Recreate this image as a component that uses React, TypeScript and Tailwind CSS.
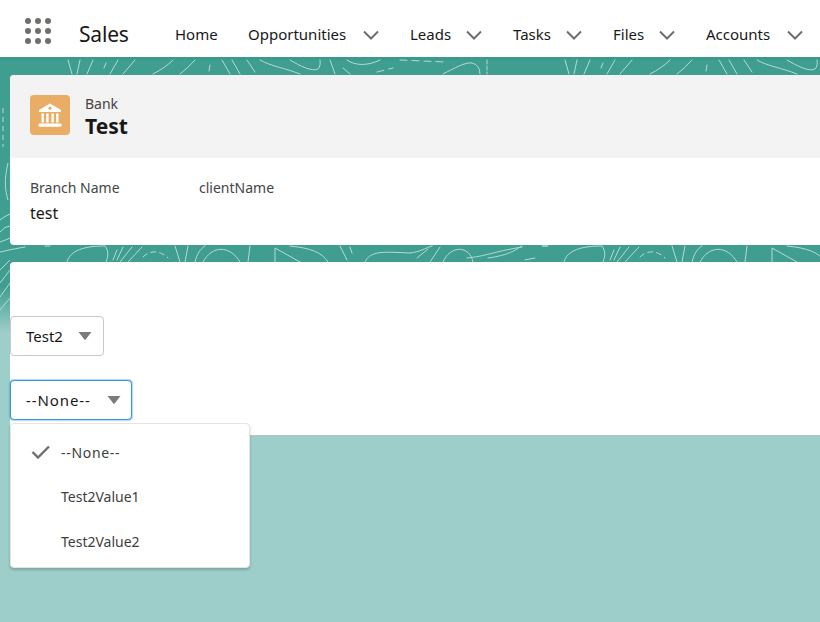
import React from "react";

const font = { fontFamily: '"Noto Sans", "Open Sans", sans-serif' };

const NavItems = [
  { label: "Home", width: "w-[73px]", menu: false },
  { label: "Opportunities", width: "w-[162px]", menu: true },
  { label: "Leads", width: "w-[103px]", menu: true },
  { label: "Tasks", width: "w-[100px]", menu: true },
  { label: "Files", width: "w-[93px]", menu: true },
  { label: "Accounts", width: "w-[128px]", menu: true },
];

const Chevron = () => (
  <svg width="16" height="10" viewBox="0 0 16 10" fill="none" className="shrink-0">
    <path d="M1 1.5 L8 8.5 L15 1.5" stroke="#706e6b" strokeWidth="2" />
  </svg>
);

const Caret = () => (
  <svg width="14" height="8" viewBox="0 0 14 8" className="shrink-0">
    <path d="M0.5 0 H13.5 L7.6 7.6 Q7 8 6.4 7.6 Z" fill="#7d7b79" />
  </svg>
);

const BankIcon = () => (
  <svg width="40" height="40" viewBox="0 0 40 40" className="shrink-0">
    <rect width="40" height="40" rx="4" fill="#e9ad66" />
    <path d="M20 8.5 L31 15 V17 H9 V15 Z" fill="#fff" />
    <circle cx="20" cy="13.2" r="1.6" fill="#e9ad66" />
    <rect x="11.5" y="18.5" width="2.4" height="9" fill="#fff" />
    <rect x="16.2" y="18.5" width="2.4" height="9" fill="#fff" />
    <rect x="21.4" y="18.5" width="2.4" height="9" fill="#fff" />
    <rect x="26.1" y="18.5" width="2.4" height="9" fill="#fff" />
    <rect x="8.5" y="28.5" width="23" height="3.2" rx="1.2" fill="#fff" />
  </svg>
);

const Background = () => (
  <svg
    width="820"
    height="320"
    viewBox="0 57 820 320"
    className="absolute left-0 top-[57px]"
  >
    <defs>
      <linearGradient id="fade" x1="0" y1="0" x2="0" y2="1">
        <stop offset="0" stopColor="#3f9e8f" />
        <stop offset="0.72" stopColor="#3f9e8f" />
        <stop offset="0.86" stopColor="#9ecec9" />
        <stop offset="1" stopColor="#9ecec9" />
      </linearGradient>
      <g
        id="lines"
        fill="none"
        stroke="#b4dbd5"
        strokeWidth="1"
        strokeLinecap="round"
      >
        <path d="M68 60 L72 74 M80 60 L77 74 M93 60 L87 74 M106 63 L104 68 M118 60 L110 74 M135 60 L123 74" />
        <path d="M173 60 Q165 68 153 74 M195 60 Q188 68 180 74 M210 65 L209 71 M222 60 L230 74 M232 60 L240 74 M247 60 L255 72" />
        <path d="M260 60 C270 66 285 68 300 74 M290 60 C300 66 312 72 318 69 Q321 66 320 60 M330 60 L335 74 M343 68 L350 74" />
        <path d="M347 60 C355 66 368 66 380 60" />
        <path d="M377 72 L393 68 M400 60 L445 62" strokeDasharray="7 5" />
        <path d="M443 74 C455 68 465 62 472 63 Q480 65 480 74" />
        <path d="M487 60 V74" strokeDasharray="4 2" />
        <path d="M-30 258 C-10 256 -5 252 25 247 M45 246 H50" />
        <path d="M67 262 C70 250 85 246 105 246 C108 250 109 255 106 262" />
        <path d="M117 250 L113 260 M123 247 L117 260 M132 247 L120 262 M142 247 L128 262" />
        <path d="M143 257 C150 250 160 250 168 258" strokeDasharray="5 4" />
        <path d="M175 246 L180 262 M188 246 L185 262 M195 262 C197 254 200 249 205 246" />
        <path d="M203 262 C212 245 230 245 240 262 M250 246 L248 262 M275 262 V248 L300 262" />
        <path d="M290 246 C310 248 322 252 328 262 M340 246 L347 260 M350 247 L352 253" />
        <path d="M365 262 C370 250 385 252 410 253 C420 252 425 248 432 246" />
        <path d="M417 258 L428 249 M430 262 L440 247" />
        <path d="M443 262 C450 245 470 245 473 262" />
        <path d="M488 258 C510 255 515 250 522 246 M525 260 L535 258 M543 246 H548" />
      </g>
    </defs>
    <rect x="0" y="57" width="820" height="320" fill="url(#fade)" />
    <rect x="0" y="57" width="820" height="3" fill="#3b9a8b" />
    <use href="#lines" />
    <use href="#lines" x="497" />
    <g fill="none" stroke="#b4dbd5" strokeWidth="1">
      <path d="M3 108 V147" strokeDasharray="5 4" />
      <path d="M8 163 C4 180 5 190 8 200" />
      <path d="M0 220 Q5 216 10 214 M0 232 Q5 226 10 226 M0 242 Q6 240 10 238" />
      <path d="M0 270 L10 260 M0 283 L10 270 M0 297 L10 283 M0 310 L10 298" />
    </g>
  </svg>
);

export default function App() {
  return (
    <div
      className="relative h-[622px] w-[820px] overflow-hidden bg-[#9ecec9] text-[#181818]"
      style={font}
    >
      <Background />

      <header className="relative flex h-[57px] items-center bg-white pt-[12px]">
        <div className="mb-[8px] ml-[25px] grid w-[26px] shrink-0 grid-cols-3 gap-x-[4px] gap-y-[4px]">
          {Array.from({ length: 9 }).map((_, i) => (
            <span key={i} className="h-[6px] w-[6px] rounded-full bg-[#706e6b]" />
          ))}
        </div>
        <div className="ml-[28px] w-[96px] shrink-0 text-[21px] leading-none tracking-[-0.2px]">
          Sales
        </div>
        <nav className="flex shrink-0 items-center">
          {NavItems.map((item) => (
            <div
              key={item.label}
              className={`flex shrink-0 items-center justify-between pr-[31px] text-[15px] leading-none ${item.width}`}
            >
              <span>{item.label}</span>
              {item.menu && <Chevron />}
            </div>
          ))}
        </nav>
      </header>

      <main className="relative flex flex-col pl-[10px] pt-[18px]">
        <section className="h-[170px] w-[830px] overflow-hidden rounded-[4px] bg-white">
          <div className="flex h-[83px] items-start gap-[15px] bg-[#f3f3f3] pl-[20px] pt-[20px]">
            <BankIcon />
            <div className="flex flex-col">
              <span className="text-[14px] leading-[18px] text-[#444444]">Bank</span>
              <span className="text-[21px] font-bold leading-[26px]">Test</span>
            </div>
          </div>
          <div className="flex pl-[20px] pt-[20px]">
            <div className="w-[169px]">
              <div className="text-[14px] leading-[20px] text-[#444444]">Branch Name</div>
              <div className="mt-[3px] text-[16px] leading-[24px]">test</div>
            </div>
            <div className="text-[14px] leading-[20px] text-[#444444]">clientName</div>
          </div>
        </section>

        <section className="relative mt-[17px] flex h-[174px] w-[830px] flex-col items-start gap-[24px] rounded-t-[4px] border-b border-[#bcc4c3] bg-white pt-[54px]">
          <button className="flex h-[40px] w-[94px] items-center justify-between rounded-[4px] border border-[#c9c7c5] bg-white pl-[15px] pr-[11px] text-[15px]">
            <span>Test2</span>
            <Caret />
          </button>
          <button className="flex h-[40px] w-[122px] items-center justify-between rounded-[4px] border border-[#3a96dd] bg-white pl-[15px] pr-[10px] text-[15px] shadow-[0_0_2px_#0176d3]">
            <span className="tracking-[0.9px]">--None--</span>
            <Caret />
          </button>

          <ul className="absolute left-0 top-[161px] flex h-[145px] w-[240px] flex-col rounded-[4px] border border-[#e5e5e5] bg-white pt-[6px] text-[14px] text-[#3e3e3c] shadow-[0_2px_3px_rgba(0,0,0,0.2)]">
            <li className="flex h-[44px] items-center gap-[10px] pl-[20px]">
              <svg width="20" height="14" viewBox="0 0 20 14" fill="none">
                <path d="M1.5 7 L7 12.5 L18 1.5" stroke="#706e6b" strokeWidth="2.4" />
              </svg>
              <span className="tracking-[0.7px]">--None--</span>
            </li>
            <li className="flex h-[45px] items-center pl-[50px]">Test2Value1</li>
            <li className="flex h-[44px] items-center pl-[50px]">Test2Value2</li>
          </ul>
        </section>
      </main>
    </div>
  );
}
